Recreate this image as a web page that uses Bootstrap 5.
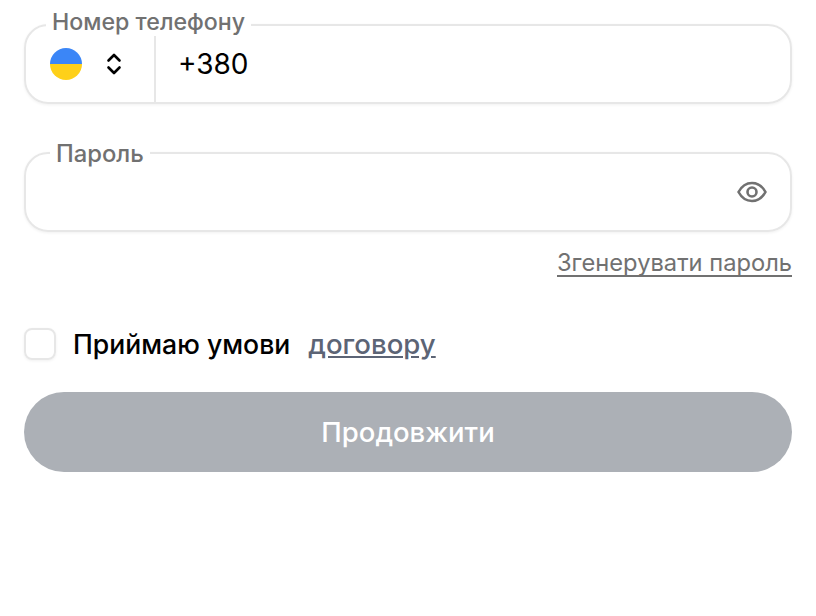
<!doctype html>
<html lang="uk">
<head>
<meta charset="utf-8">
<title>Реєстрація</title>
<link href="https://cdn.jsdelivr.net/npm/bootstrap@5.3.0/dist/css/bootstrap.min.css" rel="stylesheet">
<style>
html,body{height:100%;background:#fff;overflow:hidden}
body{font-family:Inter,"Liberation Sans",sans-serif;color:#000}
.sheet{padding:24px 24px 0}
.fld{position:relative;height:80px;border:2px solid #e7e7e7;border-radius:24px;box-shadow:0 1px 3px rgba(0,0,0,.06)}
.fld-gap{height:48px}
.fld-label{position:absolute;background:#fff;color:#717171;font-weight:500;line-height:28px;padding:0 6px;white-space:nowrap}
.lab-phone{left:20px;top:-18px;font-size:23.200px}
.lab-pass{left:24px;top:-14px;font-size:23.800px}
.country{width:130px;height:100%;border-right:2px solid #e7e7e7;padding-left:24px;gap:24px;flex:none}
.flag{width:32px;height:32px;border-radius:50%;background:linear-gradient(#3b86f7 50%,#fed019 50%)}
.phone-val{font-size:28px;line-height:36px;padding-left:22px}
.pass-row{height:100%;padding-right:22px}
.gen-link{font-size:23.700px;line-height:28px;color:#717171;text-decoration:none;border-bottom:2px solid #717171;display:inline-block;height:28px}
.gen-row{margin-top:17px}
.agree{margin-top:51px;height:32px}
.box{width:32px;height:32px;border:2px solid #e7e7e7;border-radius:8px;flex:none;box-shadow:0 1px 3px rgba(0,0,0,.06)}
.agree-text{font-size:26.600px;font-weight:500;line-height:36px;margin-left:17px}
.agree-link{font-size:27.600px;font-weight:500;line-height:36px;color:#5c6475;text-decoration:underline;margin-left:18px}
.go{display:block;width:100%;height:80px;margin-top:32px;padding-top:3px;border:0;border-radius:40px;background:#acb0b6;color:#fff;font-size:27.500px;font-weight:500}
</style>
</head>
<body>
<div class="sheet">
  <div class="fld d-flex align-items-center">
    <span class="fld-label lab-phone">Номер телефону</span>
    <div class="country d-flex align-items-center">
      <span class="flag"></span>
      <svg width="16" height="22" viewBox="0 0 16 22" fill="none" stroke="#000" stroke-width="2.6" stroke-linecap="round" stroke-linejoin="round"><path d="M2.5 7.5 8 2l5.5 5.5M2.5 14.5 8 20l5.500-5.500"/></svg>
    </div>
    <span class="phone-val">+380</span>
  </div>
  <div class="fld-gap"></div>
  <div class="fld">
    <span class="fld-label lab-pass">Пароль</span>
    <div class="pass-row d-flex align-items-center justify-content-end">
      <svg width="32" height="32" viewBox="0 0 32 32" fill="none" stroke="#717171" stroke-width="2.6" stroke-linecap="round" stroke-linejoin="round"><path d="M2.500 16C5.500 10.500 10.500 7 16 7s10.500 3.500 13.500 9C26.500 21.500 21.500 25 16 25S5.500 21.500 2.500 16Z"/><circle cx="16" cy="16" r="4.500"/></svg>
    </div>
  </div>
  <div class="gen-row text-end"><a class="gen-link" href="#">Згенерувати пароль</a></div>
  <div class="agree d-flex align-items-center">
    <span class="box"></span>
    <span class="agree-text">Приймаю умови</span>
    <a class="agree-link" href="#">договору</a>
  </div>
  <button class="go" type="button">Продовжити</button>
</div>
<script src="https://cdn.jsdelivr.net/npm/bootstrap@5.3.0/dist/js/bootstrap.bundle.min.js"></script>
</body>
</html>
